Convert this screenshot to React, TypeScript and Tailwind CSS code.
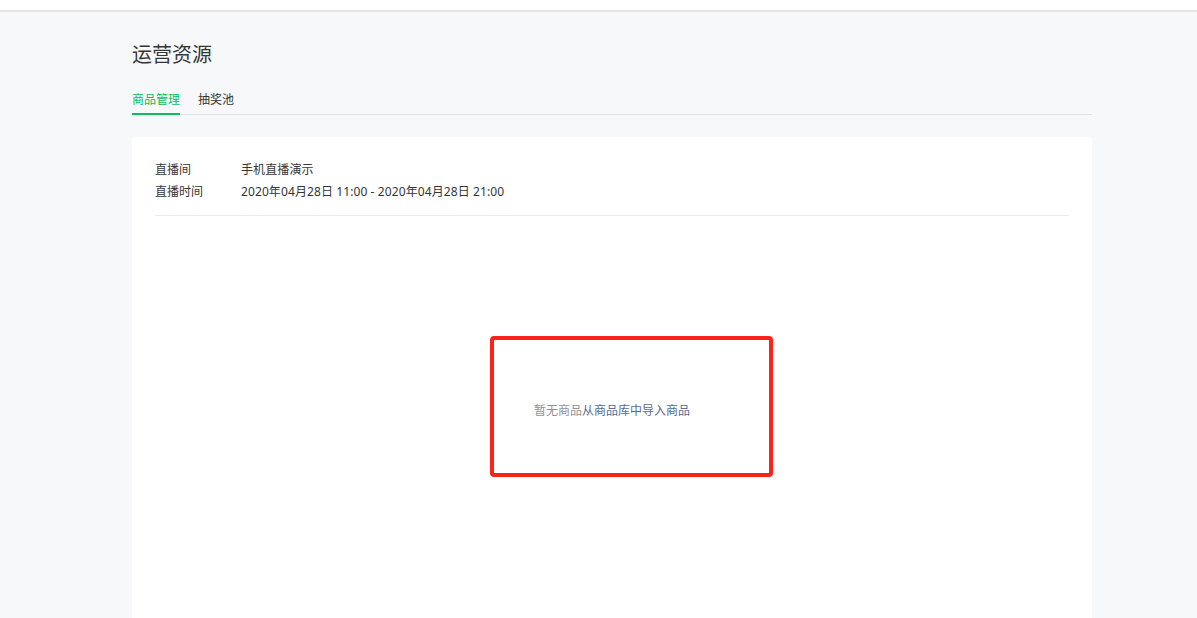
import React from 'react';

const FONT = '"Noto Sans", "Noto Sans CJK SC", "Liberation Sans", sans-serif';

const InfoRow = ({ label, value }: { label: string; value: string }) => (
  <div className="flex text-[12px] leading-[22px] text-[#353535]">
    <span className="w-[86px] shrink-0">{label}</span>
    <span className="tracking-[0.1px]">{value}</span>
  </div>
);

const App = () => {
  return (
    <div className="min-h-screen bg-[#f7f8fa] overflow-hidden" style={{ fontFamily: FONT }}>
      <header className="h-[12px] bg-white border-b-2 border-[#e3e4e6]" />
      <main className="ml-[132px] w-[960px]">
        <h1 className="pt-[29px] text-[20px] leading-[28px] font-normal text-[#353535]">运营资源</h1>
        <nav className="mt-[18px] flex gap-[18px] border-b border-[#e1e2e4] text-[12px] leading-[26px]">
          <span className="text-[#07c160] border-b-[2px] border-[#07c160] -mb-px">商品管理</span>
          <span className="text-[#353535]">抽奖池</span>
        </nav>
        <section className="relative mt-[22px] bg-white rounded-[4px] px-[23px] pt-[22px] pb-[24px]">
          <div className="pb-[12px] border-b border-[#ececec]">
            <InfoRow label="直播间" value="手机直播演示" />
            <InfoRow label="直播时间" value="2020年04月28日 11:00 - 2020年04月28日 21:00" />
          </div>
          <div className="h-[390px] flex items-center justify-center text-[12px] leading-[14px]">
            <span className="text-[#929292]">暂无商品</span>
            <span className="text-[#576b95]">从商品库中导入商品</span>
          </div>
          <div className="absolute left-[358px] top-[199px] w-[283px] h-[141px] border-[4px] border-[#fe2318] rounded-[4px]" />
        </section>
      </main>
    </div>
  );
};

export default App;
